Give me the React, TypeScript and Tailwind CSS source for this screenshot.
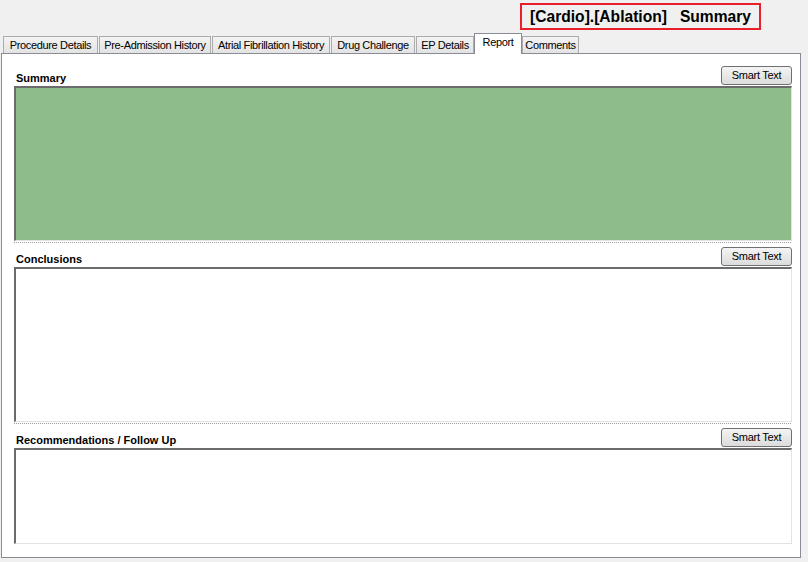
import React from 'react';

const tabs = [
  { label: 'Procedure Details', w: 'w-[95px]', ml: 'ml-0' },
  { label: 'Pre-Admission History', w: 'w-[112px]', ml: 'ml-[1px]' },
  { label: 'Atrial Fibrillation History', w: 'w-[118px]', ml: 'ml-[1px]' },
  { label: 'Drug Challenge', w: 'w-[84px]', ml: 'ml-[1px]' },
  { label: 'EP Details', w: 'w-[58px]', ml: 'ml-[1px]' },
  { label: 'Report', w: 'w-[48px]', ml: 'ml-0', selected: true },
  { label: 'Comments', w: 'w-[57px]', ml: 'ml-0' },
];

const SmartTextButton = () => (
  <button
    type="button"
    className="w-[71px] h-[19px] rounded-[3px] border border-[#707070] bg-gradient-to-b from-[#f4f4f4] to-[#dcdcdc] text-[11px] leading-none tracking-[-0.3px] text-black flex items-center justify-center"
  >
    Smart Text
  </button>
);

const Separator = () => (
  <div className="mt-[1px] mb-[4px] h-[1px] bg-[repeating-linear-gradient(90deg,#9c9c9c_0_1px,transparent_1px_2px)]" />
);

interface SectionProps {
  label: string;
  boxHeight: string;
  green?: boolean;
}

const Section: React.FC<SectionProps> = ({ label, boxHeight, green }) => (
  <div className="flex flex-col">
    <div className="flex items-start justify-between h-[20px]">
      <span className="pl-[2px] pt-[7px] text-[11px] font-bold leading-none">{label}</span>
      <SmartTextButton />
    </div>
    <div
      className={`${boxHeight} border-t-2 border-l-2 border-t-[#6b6b6b] border-l-[#6b6b6b] border-r border-b border-r-[#e3e3e3] border-b-[#e3e3e3] ${green ? 'bg-[#8fbc8b]' : 'bg-white'}`}
    />
  </div>
);

export default function App() {
  return (
    <div className="w-[808px] h-[562px] bg-[#f0f0f0] overflow-hidden text-black font-['Liberation_Sans',Arial,sans-serif]">
      {/* title */}
      <div className="flex justify-end h-[33px] pt-[3px] pr-[47px]">
        <div className="h-[27px] border-2 border-[#e8202a] px-[8px] flex items-center text-[15.6px] font-bold whitespace-pre leading-none">
          {'[Cardio].[Ablation]   Summary'}
        </div>
      </div>

      {/* tabs */}
      <div className="relative z-10 flex items-end h-[20px] pl-[3px]">
        {tabs.map((t) =>
          t.selected ? (
            <div
              key={t.label}
              className={`${t.w} ${t.ml} h-[21px] -mb-[1px] bg-white border-t border-l border-r border-[#898c95] flex items-start justify-center pt-[3px] text-[11px] tracking-[-0.35px] leading-none`}
            >
              {t.label}
            </div>
          ) : (
            <div
              key={t.label}
              className={`${t.w} ${t.ml} h-[17px] bg-gradient-to-b from-[#f3f3f3] to-[#e3e3e3] border-t border-l border-r border-[#acacac] flex items-center justify-center text-[11px] tracking-[-0.35px] leading-none whitespace-nowrap`}
            >
              {t.label}
            </div>
          )
        )}
      </div>

      {/* panel */}
      <div className="ml-[1px] w-[800px] h-[505px] border border-[#898c95] bg-white pl-[12px] pr-[8px] pt-[12px]">
        <Section label="Summary" boxHeight="h-[155px]" green />
        <Separator />
        <Section label="Conclusions" boxHeight="h-[155px]" />
        <Separator />
        <Section label="Recommendations / Follow Up" boxHeight="h-[96px]" />
      </div>
    </div>
  );
}
